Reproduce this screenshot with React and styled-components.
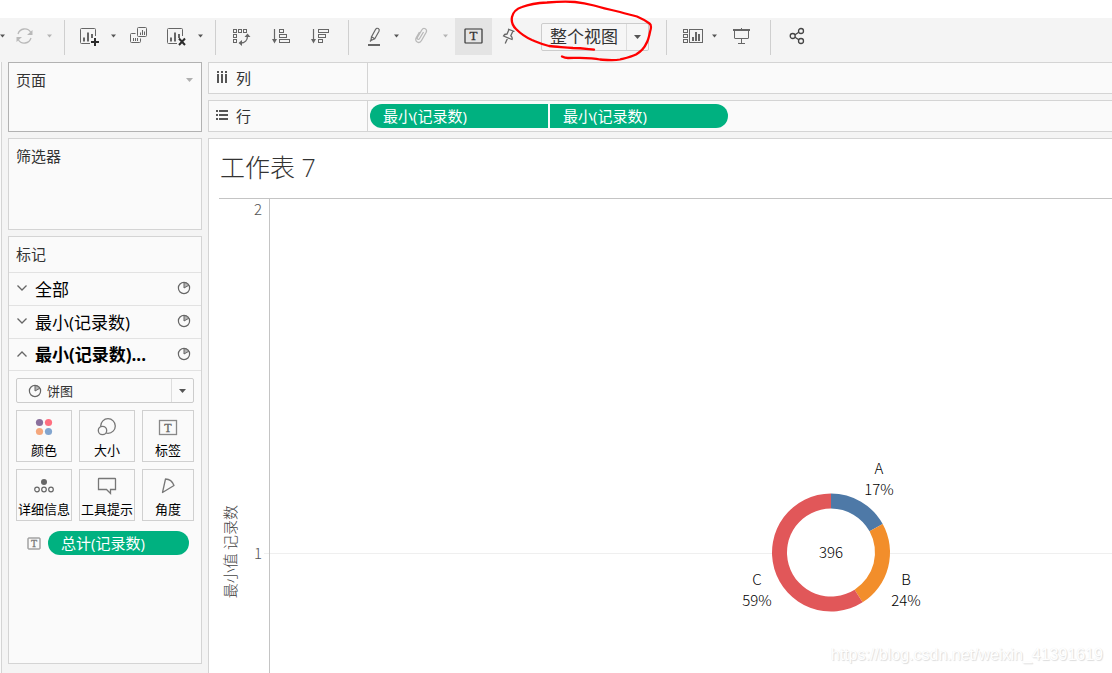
import React from "react";
import styled, { createGlobalStyle, css } from "styled-components";

const ui = `"Open Sans", "Noto Sans CJK SC", sans-serif`;
const viz = `"Noto Sans CJK SC", "Noto Sans", sans-serif`;
const line = "#d4d4d4";
const ink = "#666";
const green = "#00b180";

const GlobalStyle = createGlobalStyle`
  *, *::before, *::after { box-sizing: border-box; }
  body { margin: 0; background: #fff; font-family: ${ui}; color: #333; }
  button, select { font: inherit; color: inherit; }
  svg { display: block; flex: none; }
`;

const Page = styled.div`
  display: flex;
  flex-direction: column;
  min-height: 100vh;
  padding-top: 18px;
  overflow: hidden;
`;

const Toolbar = styled.header`
  display: flex;
  align-items: center;
  height: 37px;
  background: #f4f4f4;
`;

const ToolButton = styled.button`
  display: flex;
  align-items: center;
  justify-content: center;
  flex: none;
  width: ${(p) => p.$w}px;
  height: 37px;
  margin: 0 0 0 ${(p) => p.$before || 0}px;
  padding: 0 0 1px;
  border: 0;
  background: ${(p) => (p.$on ? "#e4e4e4" : "transparent")};
`;

const Separator = styled.span`
  flex: none;
  width: 1px;
  height: 35px;
  margin-left: ${(p) => p.$before}px;
  margin-top: 2px;
  background: #cfcfcf;
`;

const selectBox = css`
  position: relative;
  display: flex;
  align-items: center;
  border: 1px solid #ccc;
  border-radius: 2px;
  background: #fafafa;
`;

const FitBox = styled.label`
  ${selectBox}
  flex: none;
  width: 108px;
  height: 28px;
  margin-left: 15px;
  background: #f6f6f6;
`;

const MarkTypeBox = styled.label`
  ${selectBox}
  height: 25px;
  padding-left: 11px;
`;

const Select = styled.select`
  appearance: none;
  flex: 1;
  min-width: 0;
  height: 100%;
  margin: 0;
  padding: 0 0 0 ${(p) => p.$pad}px;
  border: 0;
  outline: 0;
  background: transparent;
  font-size: ${(p) => p.$size}px;
`;

const SelectArrow = styled.span`
  display: flex;
  align-items: center;
  justify-content: center;
  width: 22px;
  height: 100%;
  border-left: 1px solid #ddd;
  pointer-events: none;
`;

const Scribble = styled.svg`
  position: absolute;
  left: -37px;
  top: -24px;
  pointer-events: none;
  z-index: 2;
`;

const Workspace = styled.div`
  display: flex;
  flex: 1;
  padding-top: 7px;
  background: #f4f4f4;
`;

const EdgePane = styled.div`
  width: 2px;
  margin-right: 6px;
  border-right: 1px solid ${line};
  background: #fafafa;
`;

const Side = styled.aside`
  display: flex;
  flex-direction: column;
  flex: none;
  gap: 6px;
  width: 194px;
  margin-right: 6px;
  padding-bottom: 9px;
`;

const Card = styled.section`
  display: flex;
  justify-content: space-between;
  height: ${(p) => p.$h}px;
  padding: 7px;
  border: 1px solid ${(p) => (p.$strong ? "#b2b2b2" : line)};
  background: #fafafa;
`;

const CardTitle = styled.h2`
  margin: 0;
  font-size: 15px;
  font-weight: 400;
  line-height: 20px;
`;

const CardMenu = styled.button`
  height: 20px;
  padding: 0;
  border: 0;
  background: none;
`;

const MarksCard = styled.section`
  flex: 1;
  border: 1px solid ${line};
  background: #fafafa;
`;

const MarksHead = styled.div`
  display: flex;
  align-items: center;
  height: 35px;
  padding: 0 0 2px 7px;
`;

const LayerRow = styled.button`
  display: flex;
  align-items: center;
  gap: 8px;
  width: 100%;
  height: ${(p) => (p.$bold ? 32 : 33)}px;
  padding: 0 10px 2px 8px;
  border: 0;
  border-top: 1px solid #e2e2e2;
  background: none;
  color: #000;
  font-size: 17px;
  font-weight: ${(p) => (p.$bold ? 700 : 400)};
  text-align: left;
`;

const LayerName = styled.span`
  flex: 1;
  white-space: nowrap;
`;

const MarksBody = styled.div`
  display: flex;
  flex-direction: column;
  gap: 7px;
  padding: 7px;
  border-top: 1px solid #e2e2e2;
`;

const Tiles = styled.div`
  display: grid;
  grid-template-columns: 56px 56px 52px;
  gap: 7px;
`;

const Tile = styled.button`
  display: flex;
  flex-direction: column;
  align-items: center;
  gap: 5px;
  height: 52px;
  padding: 6px 0 0;
  border: 1px solid #d0d0d0;
  background: #fafafa;
  color: #000;
  font-size: 13px;
  line-height: 16px;
  white-space: nowrap;
`;

const MarkField = styled.div`
  display: flex;
  align-items: center;
  gap: 7px;
  padding: 3px 5px 0 11px;
`;

const Pill = styled.button`
  flex: ${(p) => (p.$w ? "none" : 1)};
  width: ${(p) => (p.$w ? p.$w + "px" : "auto")};
  height: 24px;
  padding: 0 13px;
  border: 0;
  border-radius: ${(p) =>
    p.$end === "left" ? "12px 0 0 12px" : p.$end === "right" ? "0 12px 12px 0" : "12px"};
  background: ${green};
  color: #fff;
  font-size: 15px;
  line-height: 24px;
  text-align: left;
`;

const Main = styled.main`
  display: flex;
  flex: 1;
  flex-direction: column;
  gap: 6px;
  min-width: 0;
`;

const Shelf = styled.div`
  display: flex;
  align-items: center;
  height: 32px;
  border: 1px solid ${line};
  border-right: 0;
  background: #fafafa;
`;

const ShelfName = styled.div`
  display: flex;
  align-items: center;
  gap: 7px;
  width: 159px;
  height: 100%;
  padding: 0 0 2px 6px;
  border-right: 1px solid ${line};
  font-size: 15px;
`;

const ShelfFields = styled.div`
  display: flex;
  gap: 2px;
  padding-left: 2px;
`;

const View = styled.section`
  position: relative;
  display: flex;
  flex: 1;
  flex-direction: column;
  padding-left: 10px;
  border: solid ${line};
  border-width: 1px 0 0 1px;
  background: #fff;
`;

const SheetTitle = styled.h1`
  margin: 0;
  padding: 0 0 3px 1px;
  border-bottom: 1px solid #c4c4c4;
  font-size: 25px;
  font-weight: 300;
  line-height: 56px;
`;

const Plot = styled.div`
  display: grid;
  grid-template-columns: 21px 29px 1fr;
  flex: 1;
`;

const AxisTitle = styled.div`
  justify-self: center;
  align-self: start;
  margin-top: 306px;
  color: #444;
  font-family: ${viz};
  font-size: 15px;
  font-weight: 300;
  line-height: 20px;
  white-space: nowrap;
  writing-mode: vertical-rl;
  text-orientation: sideways;
  transform: rotate(180deg);
`;

const Ticks = styled.div`
  display: flex;
  flex-direction: column;
  justify-content: space-between;
  height: 364px;
  padding-right: 7px;
  color: #555;
  font-family: ${viz};
  font-size: 15px;
  font-weight: 300;
  line-height: 20px;
  text-align: right;
`;

const Pane = styled.svg`
  width: 100%;
  height: 100%;
  overflow: visible;
  font-family: ${viz};
  font-size: 15px;
  font-weight: 300;
  text-anchor: middle;
`;

const Watermark = styled.div`
  position: absolute;
  right: 9px;
  bottom: 8px;
  color: #fff;
  font-family: "Liberation Sans", Arial, sans-serif;
  font-size: 16px;
  line-height: 20px;
  text-shadow: 1px 1px 1px #dcdcdc, 0 0 1px #e8e8e8;
`;

const Glyph = ({ w, h = 21, children, color = ink }) => (
  <svg width={w} height={h} viewBox={`0 0 ${w} ${h}`} fill="none" stroke={color} aria-hidden="true">
    {children}
  </svg>
);

const Caret = ({ color = "#555", big }) =>
  big ? (
    <svg width="9" height="6" aria-hidden="true"><path d="M1 1h7L4.500 5z" fill={color} /></svg>
  ) : (
    <svg width="5" height="4" aria-hidden="true"><path d="M0 0.500h5L2.500 3.500z" fill={color} /></svg>
  );

const PieGlyph = () => (
  <Glyph w={14} h={14}>
    <circle cx="7" cy="7" r="5.600" strokeWidth="1.200" />
    <path d="M7 7V1.500A5.500 5.500 0 0 1 11.800 4.300Z" fill="#b5b5b5" />
  </Glyph>
);

const Chevron = ({ up }) => (
  <Glyph w={10} h={8}>
    <path d={up ? "M.5 6.500 5 2l4.500 4.500" : "M.5 1.500 5 6l4.500-4.500"} strokeWidth="1.300" />
  </Glyph>
);

const BoxedT = ({ w, h, size, color, sw = 1.5 }) => (
  <Glyph w={w} h={h} color={color}>
    <rect x="1" y="1" width={w - 2} height={h - 2} rx="0.500" strokeWidth={sw} />
    <text
      x={w / 2}
      y={h / 2 + size / 3}
      fontFamily="Liberation Serif, serif"
      fontSize={size}
      textAnchor="middle"
      fill={color || ink}
      stroke={color || ink}
      strokeWidth="0.300"
    >
      T
    </text>
  </Glyph>
);

const sheetBars = (
  <>
    <path d="M10 17.500H1.500a1 1 0 0 1-1-1V3.500a1 1 0 0 1 1-1h13a1 1 0 0 1 1 1V10" />
    <path d="M4 15.500v-4M8 15.500v-9M12 12V8" strokeWidth="2" />
  </>
);

const RefreshGlyph = () => (
  <Glyph w={19} color="#b9b9b9">
    <path d="M3 8A7 7 0 0 1 15.800 6.500M16 12A7 7 0 0 1 3.200 13.500" strokeWidth="1.300" />
    <path d="M17.500 4v5h-5.500zM1.500 16v-5h5.500z" fill="#b9b9b9" stroke="none" />
  </Glyph>
);
const NewSheetGlyph = () => (
  <Glyph w={20}>
    {sheetBars}
    <path d="M15 12v8M11 16h8" stroke="#2b2b2b" strokeWidth="2" />
  </Glyph>
);
const DuplicateGlyph = () => (
  <Glyph w={18}>
    <rect x="7.500" y="1.500" width="9" height="9" rx="1" />
    <path d="M10.500 9V6.500M12.500 9V4M14.500 9V5.500" />
    <path d="M5.500 7.500h-4a1 1 0 0 0-1 1v7a1 1 0 0 0 1 1h8a1 1 0 0 0 1-1v-3" />
    <path d="M3.500 15v-3M5.500 15v-3M7.500 15v-3" />
  </Glyph>
);
const ClearGlyph = () => (
  <Glyph w={22}>
    {sheetBars}
    <path d="m12 12.500 6 6.500M18 12.500 12 19" stroke="#2b2b2b" strokeWidth="2" />
  </Glyph>
);
const SwapGlyph = () => (
  <Glyph w={20}>
    {[[1, 3], [6, 3], [11, 3], [1, 8], [1, 13]].map(([x, y]) => (
      <rect key={`${x}-${y}`} x={x + 0.5} y={y + 0.5} width="3" height="3" />
    ))}
    <path d="M15.500 10c0 4-2.500 7-7 7" strokeWidth="1.300" />
    <path d="M12.500 11l3-3.500 3 3.500zM10 14l-3.500 3 3.500 3z" fill={ink} stroke="none" />
  </Glyph>
);
const SortGlyph = ({ widths, left }) => (
  <Glyph w={20}>
    <path d="M3.500 3v11" strokeWidth="1.200" />
    <path d="M1 13h5l-2.500 4.500z" fill={ink} stroke="none" />
    {widths.map((w, i) => (
      <rect key={i} x={left + 0.5} y={3.5 + i * 5} width={w} height="3" />
    ))}
  </Glyph>
);
const HighlightGlyph = () => (
  <Glyph w={14}>
    <path d="M7.500 3.500c.8-1.400 1.800-1.500 2.800-.9s1.300 1.400.7 2.600L6.800 12.700 3.500 10.800zM3.500 10.800l-.6 3.700 3.900-1.800M2.900 14.500 2 15.500" strokeWidth="1.200" />
    <path d="M0 19h12" strokeWidth="2" />
  </Glyph>
);
const ClipGlyph = () => (
  <Glyph w={14} color="#b9b9b9">
    <path
      d="M9.500 6 5.600 12.500c-1 1.700-3.100.6-2.200-1.200L7.800 4c1.800-3 6-1 4.400 2.200L7.500 14.500C5.300 18.300.2 15.700 2.200 11.800L5.500 6"
      strokeWidth="1.300"
    />
  </Glyph>
);
const PinGlyph = () => (
  <Glyph w={14}>
    <path d="m6 3 6.500 2.500M7 3.500 5 8C3.500 8 2 8.500 1.500 10l8.500 3.500c.5-1.500-.2-3-1.200-3.800L11 5M5.800 11.800 3.200 17.500" strokeWidth="1.300" />
  </Glyph>
);
const ShowMeGlyph = () => (
  <Glyph w={22}>
    {[3, 8, 13].map((y) => (
      <rect key={y} x="1.500" y={y + 0.5} width="4" height="3" />
    ))}
    <rect x="7.500" y="3.500" width="13" height="13" />
    <path d="M11 15v-4M14 15V6M17 15V8" strokeWidth="2" />
  </Glyph>
);
const PresentGlyph = () => (
  <Glyph w={18}>
    <path d="M0 4h17" strokeWidth="2" />
    <path d="M8.500 2v2M1.500 5v7a.5.5 0 0 0 .5.500h13a.5.500 0 0 0 .5-.5V5M8.500 12.500v5M5 17.500h7" />
  </Glyph>
);
const ShareGlyph = () => (
  <Glyph w={18} color="#444">
    <circle cx="4.700" cy="10" r="2.500" strokeWidth="1.300" />
    <circle cx="13" cy="5" r="2.500" strokeWidth="1.300" />
    <circle cx="13" cy="15" r="2.500" strokeWidth="1.300" />
    <path d="m7 8.700 3.800-2.400M7 11.300l3.800 2.400" strokeWidth="1.300" />
  </Glyph>
);

const ColorGlyph = () => (
  <Glyph w={20} h={20}>
    <g stroke="none">
      <circle cx="5.500" cy="5.500" r="3.600" fill="#8a6f9c" />
      <circle cx="14.500" cy="5.500" r="3.600" fill="#ff6f80" />
      <circle cx="5.500" cy="14.500" r="3.600" fill="#f5a77c" />
      <circle cx="14.500" cy="14.500" r="3.600" fill="#82a5cf" />
    </g>
  </Glyph>
);
const SizeGlyph = () => (
  <Glyph w={20} h={20} color="#777">
    <circle cx="11" cy="9" r="7.300" strokeWidth="1.300" />
    <circle cx="5.500" cy="13.500" r="4.200" fill="#fafafa" strokeWidth="1.300" />
  </Glyph>
);
const DetailGlyph = () => (
  <Glyph w={20} h={20}>
    <circle cx="10" cy="6" r="3" fill={ink} stroke="none" />
    {[3, 10, 17].map((x) => (
      <circle key={x} cx={x} cy="13.500" r="2.300" strokeWidth="1.200" />
    ))}
  </Glyph>
);
const TooltipGlyph = () => (
  <Glyph w={20} h={20} color="#777">
    <path d="M2 2.500h16a.5.500 0 0 1 .5.500v10.500h-5v4l-4-4H1.500V3a.5.500 0 0 1 .5-.5z" strokeWidth="1.300" />
  </Glyph>
);
const AngleGlyph = () => (
  <Glyph w={20} h={20} color="#777">
    <path d="M7.500 3c3.500 0 7 2.500 8.500 6.500L4.500 16.500z" strokeWidth="1.300" strokeLinejoin="round" />
  </Glyph>
);
const ColumnsGlyph = () => (
  <Glyph w={14} h={14} color="#555">
    <path d="M3 4v9M7 4v9M11 4v9M3 1v2M7 1v2M11 1v2" strokeWidth="2" />
  </Glyph>
);
const RowsGlyph = () => (
  <Glyph w={14} h={14} color="#555">
    <path d="M4 3h9M4 7h9M4 11h9M1 3h2M1 7h2M1 11h2" strokeWidth="2" />
    <path d="M3.500 1v12" stroke="#fafafa" />
  </Glyph>
);

const layers = [
  { name: "全部" },
  { name: "最小(记录数)" },
  { name: "最小(记录数)...", open: true },
];

const tiles = [
  ["颜色", <ColorGlyph />],
  ["大小", <SizeGlyph />],
  ["标签", <Glyph w={20} h={20} color="#888">
    <rect x="1.500" y="3.500" width="17" height="14" strokeWidth="1.300" />
    <text x="10" y="14.500" fontFamily="Liberation Serif, serif" fontSize="12" textAnchor="middle" fill="#666" stroke="#666" strokeWidth="0.300">T</text>
  </Glyph>],
  ["详细信息", <DetailGlyph />],
  ["工具提示", <TooltipGlyph />],
  ["角度", <AngleGlyph />],
];

const slices = [
  { name: "A", share: 17, color: "#4e79a7", x: 48, y: -79 },
  { name: "B", share: 24, color: "#f28e2b", x: 75, y: 32 },
  { name: "C", share: 59, color: "#e15759", x: -74, y: 32 },
];

const ringPath = (from, to) => {
  const R = 59;
  const r = 44;
  const at = (rad, t) => {
    const a = t * 2 * Math.PI;
    return `${(Math.sin(a) * rad).toFixed(2)} ${(-Math.cos(a) * rad).toFixed(2)}`;
  };
  const big = to - from > 0.5 ? 1 : 0;
  return `M${at(R, from)}A${R} ${R} 0 ${big} 1 ${at(R, to)}L${at(r, to)}A${r} ${r} 0 ${big} 0 ${at(r, from)}Z`;
};

function Donut() {
  let start = 0;
  return (
    <g transform="translate(562 353.500)">
      <circle r="50" fill="#fff" />
      {slices.map((s) => {
        const from = start;
        start += s.share / 100;
        return (
          <g key={s.name} fill="#000">
            <path d={ringPath(from, start)} fill={s.color} />
            <text x={s.x} y={s.y + 0.5}>{s.name}</text>
            <text x={s.x} y={s.y + 21.5}>{s.share}%</text>
          </g>
        );
      })}
      <text y="5.500">396</text>
    </g>
  );
}

export default function App() {
  return (
    <>
      <GlobalStyle />
      <Page>
        <Toolbar>
          <ToolButton $w={4} aria-label="更多"><Caret /></ToolButton>
          <ToolButton $w={41} aria-label="刷新"><RefreshGlyph /></ToolButton>
          <ToolButton $w={9} aria-label="刷新选项"><Caret color="#b4b4b4" /></ToolButton>
          <Separator $before={10} />
          <ToolButton $w={38} $before={6} aria-label="新建工作表"><NewSheetGlyph /></ToolButton>
          <ToolButton $w={9} aria-label="新建选项"><Caret /></ToolButton>
          <ToolButton $w={42} aria-label="复制"><DuplicateGlyph /></ToolButton>
          <ToolButton $w={36} aria-label="清除工作表"><ClearGlyph /></ToolButton>
          <ToolButton $w={9} aria-label="清除选项"><Caret /></ToolButton>
          <Separator $before={10} />
          <ToolButton $w={40} $before={6} aria-label="交换行和列"><SwapGlyph /></ToolButton>
          <ToolButton $w={38} aria-label="升序排序"><SortGlyph left={8} widths={[4, 7, 10]} /></ToolButton>
          <ToolButton $w={40} aria-label="降序排序"><SortGlyph left={8} widths={[10, 7, 4]} /></ToolButton>
          <Separator $before={8} />
          <ToolButton $w={34} $before={9} aria-label="突出显示"><HighlightGlyph /></ToolButton>
          <ToolButton $w={9} aria-label="突出显示选项"><Caret /></ToolButton>
          <ToolButton $w={40} aria-label="组成员"><ClipGlyph /></ToolButton>
          <ToolButton $w={9} aria-label="组选项"><Caret color="#b4b4b4" /></ToolButton>
          <ToolButton $w={37} $before={5} $on aria-pressed="true" aria-label="显示标记标签">
            <BoxedT w={19} h={16} size={13} color="#333" sw={1.2} />
          </ToolButton>
          <ToolButton $w={34} aria-label="固定轴"><PinGlyph /></ToolButton>
          <FitBox>
            <Select $size={17} $pad={8} aria-label="适合" defaultValue="整个视图">
              <option>整个视图</option>
            </Select>
            <SelectArrow><Caret big /></SelectArrow>
            <Scribble width="150" height="64" viewBox="505 0 150 64" fill="none" stroke="#f00" strokeWidth="2.300" strokeLinecap="round" strokeLinejoin="round">
              <path d="M594 49.700C587 49 582 48 573 48C564 47 557 47 549 46C541 44 537 42 532 40C525 37 520 33 516 29C512 25 511 22 512 17C513 12 516 9 522 7C530 4 538 3 547 2.500C558 1.500 566 1 575 2C584 3 588 4 594 5.500C602 8 611 10 620 12C626 14 632 15 637 16.500C643 19 646 21 649.500 23.500C651.500 25 651 29 650 32C649 37 648 41 646 44C644 49 640 52 636 54.500C631 57 626 58 620 59.500C613 61 606 60 600 59.500C590 57 577 58 568 58C565 58 563 57 562 56.500" />
            </Scribble>
          </FitBox>
          <Separator $before={17} />
          <ToolButton $w={34} $before={9} aria-label="智能推荐"><ShowMeGlyph /></ToolButton>
          <ToolButton $w={9} aria-label="卡选项"><Caret /></ToolButton>
          <ToolButton $w={46} aria-label="演示模式"><PresentGlyph /></ToolButton>
          <Separator $before={5} />
          <ToolButton $w={40} $before={6} aria-label="共享"><ShareGlyph /></ToolButton>
        </Toolbar>

        <Workspace>
          <EdgePane />
          <Side>
            <Card $h={70} $strong>
              <CardTitle>页面</CardTitle>
              <CardMenu aria-label="页面菜单"><Caret big color="#b0b0b0" /></CardMenu>
            </Card>
            <Card $h={92}>
              <CardTitle>筛选器</CardTitle>
            </Card>
            <MarksCard>
              <MarksHead><CardTitle>标记</CardTitle></MarksHead>
              {layers.map((l) => (
                <LayerRow key={l.name} $bold={l.open} aria-expanded={!!l.open}>
                  <Chevron up={l.open} />
                  <LayerName>{l.name}</LayerName>
                  <PieGlyph />
                </LayerRow>
              ))}
              <MarksBody>
                <MarkTypeBox>
                  <PieGlyph />
                  <Select $size={13} $pad={5} aria-label="标记类型" defaultValue="饼图">
                    <option>饼图</option>
                  </Select>
                  <SelectArrow><Caret big /></SelectArrow>
                </MarkTypeBox>
                <Tiles>
                  {tiles.map(([name, icon]) => (
                    <Tile key={name}>{icon}{name}</Tile>
                  ))}
                </Tiles>
                <MarkField>
                  <BoxedT w={14} h={13} size={10} color="#777" sw={1} />
                  <Pill>总计(记录数)</Pill>
                </MarkField>
              </MarksBody>
            </MarksCard>
          </Side>

          <Main>
            <Shelf>
              <ShelfName><ColumnsGlyph />列</ShelfName>
            </Shelf>
            <Shelf>
              <ShelfName><RowsGlyph />行</ShelfName>
              <ShelfFields>
                <Pill $w={178} $end="left">最小(记录数)</Pill>
                <Pill $w={178} $end="right">最小(记录数)</Pill>
              </ShelfFields>
            </Shelf>
            <View>
              <SheetTitle>工作表 7</SheetTitle>
              <Plot>
                <AxisTitle>最小值 记录数</AxisTitle>
                <Ticks><span>2</span><span>1</span></Ticks>
                <Pane role="img" aria-label="记录数环形图">
                  <path d="M-5 354.500H4000" stroke="#efefef" />
                  <path d="M.5 0V4000" stroke="#c4c4c4" />
                  <Donut />
                </Pane>
              </Plot>
              <Watermark>https://blog.csdn.net/weixin_41391619</Watermark>
            </View>
          </Main>
        </Workspace>
      </Page>
    </>
  );
}
